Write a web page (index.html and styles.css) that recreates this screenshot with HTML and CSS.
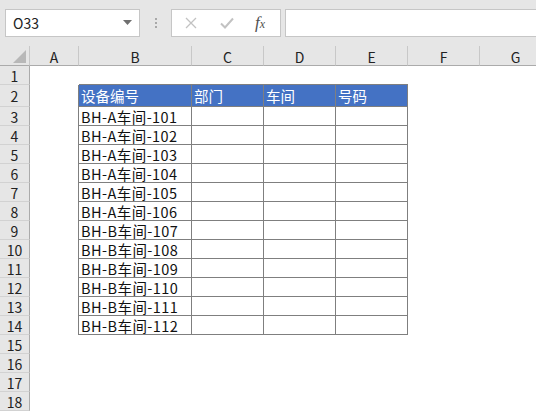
FILE: index.html
```html
<!DOCTYPE html>
<html lang="zh">
<head>
<meta charset="utf-8">
<title>Sheet</title>
<link rel="stylesheet" href="styles.css">
</head>
<body>
<div class="toolbar">
  <div class="namebox">
    <span class="ref">O33</span>
    <svg class="arrow" width="9" height="5" viewBox="0 0 9 5"><path d="M0 0H9L4.5 5Z" fill="#6f6f6f"/></svg>
  </div>
  <div class="dots"><i></i><i></i><i></i></div>
  <div class="fbtns">
    <svg class="ico" width="12" height="12" viewBox="0 0 12 12"><path d="M1 1L11 11M11 1L1 11" stroke="#c2c2c2" stroke-width="1.3" fill="none"/></svg>
    <svg class="ico" width="14" height="12" viewBox="0 0 14 12"><path d="M1 6.5L5 10.5L13 1.5" stroke="#c2c2c2" stroke-width="2" fill="none"/></svg>
    <span class="fx">f<sub>x</sub></span>
  </div>
  <div class="finput"></div>
</div>
<div class="sheet">
  <div class="corner"><svg width="13" height="13" viewBox="0 0 13 13"><path d="M13 0V13H0Z" fill="#b8b8b8"/></svg></div>
  <div class="ch">A</div><div class="ch">B</div><div class="ch">C</div><div class="ch">D</div><div class="ch">E</div><div class="ch">F</div><div class="ch">G</div>

  <div class="rh">1</div><div class="c"></div><div class="c top"></div><div class="c top"></div><div class="c top"></div><div class="c top"></div><div class="c"></div><div class="c"></div>

  <div class="rh">2</div><div class="c ab"></div><div class="t th">设备编号</div><div class="t th">部门</div><div class="t th">车间</div><div class="t th">号码</div><div class="c"></div><div class="c"></div>

  <div class="rh">3</div><div class="c ab"></div><div class="t">BH-A车间-101</div><div class="t"></div><div class="t"></div><div class="t"></div><div class="c"></div><div class="c"></div>
  <div class="rh">4</div><div class="c ab"></div><div class="t">BH-A车间-102</div><div class="t"></div><div class="t"></div><div class="t"></div><div class="c"></div><div class="c"></div>
  <div class="rh">5</div><div class="c ab"></div><div class="t">BH-A车间-103</div><div class="t"></div><div class="t"></div><div class="t"></div><div class="c"></div><div class="c"></div>
  <div class="rh">6</div><div class="c ab"></div><div class="t">BH-A车间-104</div><div class="t"></div><div class="t"></div><div class="t"></div><div class="c"></div><div class="c"></div>
  <div class="rh">7</div><div class="c ab"></div><div class="t">BH-A车间-105</div><div class="t"></div><div class="t"></div><div class="t"></div><div class="c"></div><div class="c"></div>
  <div class="rh">8</div><div class="c ab"></div><div class="t">BH-A车间-106</div><div class="t"></div><div class="t"></div><div class="t"></div><div class="c"></div><div class="c"></div>
  <div class="rh">9</div><div class="c ab"></div><div class="t">BH-B车间-107</div><div class="t"></div><div class="t"></div><div class="t"></div><div class="c"></div><div class="c"></div>
  <div class="rh">10</div><div class="c ab"></div><div class="t">BH-B车间-108</div><div class="t"></div><div class="t"></div><div class="t"></div><div class="c"></div><div class="c"></div>
  <div class="rh">11</div><div class="c ab"></div><div class="t">BH-B车间-109</div><div class="t"></div><div class="t"></div><div class="t"></div><div class="c"></div><div class="c"></div>
  <div class="rh">12</div><div class="c ab"></div><div class="t">BH-B车间-110</div><div class="t"></div><div class="t"></div><div class="t"></div><div class="c"></div><div class="c"></div>
  <div class="rh">13</div><div class="c ab"></div><div class="t">BH-B车间-111</div><div class="t"></div><div class="t"></div><div class="t"></div><div class="c"></div><div class="c"></div>
  <div class="rh">14</div><div class="c ab"></div><div class="t">BH-B车间-112</div><div class="t"></div><div class="t"></div><div class="t"></div><div class="c"></div><div class="c"></div>

  <div class="rh">15</div><div class="c span"></div>
  <div class="rh">16</div><div class="c span"></div>
  <div class="rh">17</div><div class="c span"></div>
  <div class="rh">18</div><div class="c span"></div>
</div>
</body>
</html>
```
FILE: styles.css
```css
html, body {
  margin: 0;
  padding: 0;
  width: 536px;
  height: 412px;
  overflow: hidden;
  background: #ffffff;
  font-family: "Noto Sans CJK SC", "DejaVu Sans", sans-serif;
}

.toolbar {
  height: 46px;
  background: #e6e6e6;
  display: flex;
  align-items: flex-start;
  padding-top: 9px;
  box-sizing: border-box;
}

.namebox {
  margin-left: 5px;
  width: 135px;
  height: 28px;
  box-sizing: border-box;
  background: #fff;
  border: 1px solid #c6c6c6;
  display: flex;
  align-items: center;
  justify-content: space-between;
  padding: 0 7px 0 7px;
}

.ref {
  font-size: 14px;
  color: #222;
  line-height: 1;
}

.arrow {
  margin-bottom: 2px;
}

.dots {
  width: 31px;
  height: 28px;
  display: flex;
  flex-direction: column;
  align-items: center;
  justify-content: center;
  gap: 2px;
}

.dots i {
  display: block;
  width: 2px;
  height: 2px;
  background: #a8a8a8;
}

.fbtns {
  width: 110px;
  height: 28px;
  box-sizing: border-box;
  background: #fff;
  border: 1px solid #c6c6c6;
  display: flex;
  align-items: center;
  padding-left: 13px;
}

.fbtns .ico:nth-child(1) {
  margin-right: 23px;
}

.fbtns .ico:nth-child(2) {
  margin-right: 21px;
}

.fx {
  font-family: "Liberation Serif", serif;
  font-style: italic;
  font-size: 17px;
  color: #505050;
  line-height: 1;
  margin-top: -2px;
}

.fx sub {
  font-size: 12px;
  vertical-align: 0;
  margin-left: 0;
}

.finput {
  margin-left: 4px;
  flex: 1;
  height: 28px;
  box-sizing: border-box;
  background: #fff;
  border: 1px solid #c6c6c6;
  border-right: none;
}

.sheet {
  width: 536px;
  overflow: hidden;
  display: grid;
  grid-template-columns: 30px 49px 113px 72px 72px 72px 72px 72px;
  grid-template-rows: 20px 19px 22px repeat(16, 19px);
  font-size: 14.5px;
}

.sheet > div {
  box-sizing: border-box;
  display: flex;
  overflow: hidden;
  white-space: nowrap;
}

.corner {
  background: #e6e6e6;
  border-right: 1px solid #c8c8c8;
  border-bottom: 1px solid #ababab;
  align-items: flex-end;
  justify-content: flex-end;
  padding: 0 3px 2px 0;
}

.ch {
  background: #e6e6e6;
  border-right: 1px solid #c8c8c8;
  border-bottom: 1px solid #ababab;
  align-items: center;
  justify-content: center;
  color: #222;
  font-size: 14px;
  line-height: 1;
  padding-top: 2px;
}

.rh {
  background: #e6e6e6;
  border-right: 1px solid #ababab;
  border-bottom: 1px solid #d2d2d2;
  align-items: center;
  justify-content: center;
  color: #222;
  font-size: 14px;
  line-height: 1;
  padding-top: 1px;
}

.c {
  background: #fff;
}

.c.span {
  grid-column: 2 / -1;
}

.c.top {
  border-bottom: 1px solid #7f7f7f;
}

.c.ab {
  border-right: 1px solid #7f7f7f;
}

.t {
  background: #fff;
  border-right: 1px solid #7f7f7f;
  border-bottom: 1px solid #7f7f7f;
  align-items: flex-end;
  padding: 0 0 0 2px;
  color: #111;
  line-height: 17px;
  letter-spacing: 0.45px;
}

.th {
  background: #4472c4;
  color: #fff;
  padding-bottom: 2px;
  letter-spacing: 0;
}
```
